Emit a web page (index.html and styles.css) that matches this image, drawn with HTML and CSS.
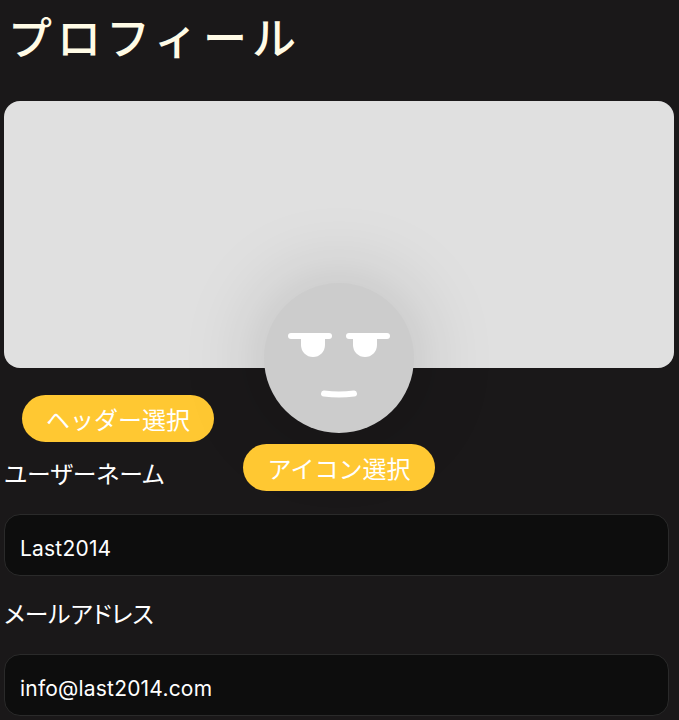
FILE: index.html
```html
<!DOCTYPE html>
<html lang="ja">
<head>
    <meta charset="UTF-8">
    <meta name="viewport" content="width=device-width, initial-scale=1.0">
    <title>プロフィール</title>
    <link rel="stylesheet" href="styles.css">
</head>
<body>
    <h1 class="page-title">プロフィール</h1>

    <div class="images">
        <div class="header-image"></div>

        <div class="avatar">
            <svg class="avatar-face" viewBox="0 0 150 150" width="150" height="150" aria-hidden="true">
                <path class="face-fill" d="M37 53h24v9a12 12 0 0 1-24 0z"/>
                <path class="face-fill" d="M89 53h24v9a12 12 0 0 1-24 0z"/>
                <line class="face-line" x1="27" y1="53" x2="65" y2="53"/>
                <line class="face-line" x1="85" y1="53" x2="123" y2="53"/>
                <path class="face-line" d="M60 110.500q15 1.800 30 0"/>
            </svg>
        </div>

        <button type="button" class="pick-btn pick-btn-header">ヘッダー選択</button>
        <button type="button" class="pick-btn pick-btn-icon">アイコン選択</button>
    </div>

    <form class="profile-form">
        <label class="field-label" for="username">ユーザーネーム</label>
        <input class="field-input" type="text" id="username" value="Last2014">

        <label class="field-label" for="email">メールアドレス</label>
        <input class="field-input" type="email" id="email" value="info@last2014.com">
    </form>
</body>
</html>
```

FILE: styles.css
```css
html { background: #1a1819; }
body { margin: 0; padding: 0 4px; background: #1a1819; color: #fff; font-family: "Inter", "Noto Sans CJK JP", sans-serif; height: 720px; overflow: hidden; }

.page-title { margin: 0; padding: 6px 0 0 4px; height: 101px; box-sizing: border-box; font-family: "Noto Sans CJK JP", sans-serif; font-size: 44px; line-height: 60px; font-weight: 500; letter-spacing: 5px; color: #fffbe6; }

.images { position: relative; padding-bottom: 19px; }
.header-image { height: 267px; margin-right: 1px; background: #e0e0e0; border-radius: 16px; }

.avatar { position: absolute; top: 182px; left: 260px; width: 150px; height: 150px; border-radius: 50%; background: #ccc; box-shadow: 0 0 85px rgba(0,0,0,0.18); }
.avatar-face { display: block; }
.face-fill { fill: #fff; }
.face-line { fill: none; stroke: #fff; stroke-width: 6; stroke-linecap: round; }

.pick-btn { display: block; width: 192px; height: 47px; padding: 0; border: none; border-radius: 24px; background: #ffc832; color: #fff; font-family: "Noto Sans CJK JP", sans-serif; font-size: 24px; font-weight: 400; cursor: pointer; }
.pick-btn-header { margin: 27px 0 0 18px; }
.pick-btn-icon { position: absolute; top: 343px; left: 239px; }

.profile-form { display: flex; flex-direction: column; }
.field-label { font-family: "Noto Sans CJK JP", sans-serif; font-size: 23.800px; font-weight: 400; line-height: 24px; margin-bottom: 29px; font-feature-settings: "palt"; }
.field-input { width: 665px; height: 62px; box-sizing: border-box; margin-bottom: 25px; padding: 6px 15px 0; border: 1px solid #2a2a2a; border-radius: 16px; background: #0d0d0d; color: #fff; font-family: "Inter", sans-serif; font-size: 21px; letter-spacing: 0.200px; outline: none; }
```
